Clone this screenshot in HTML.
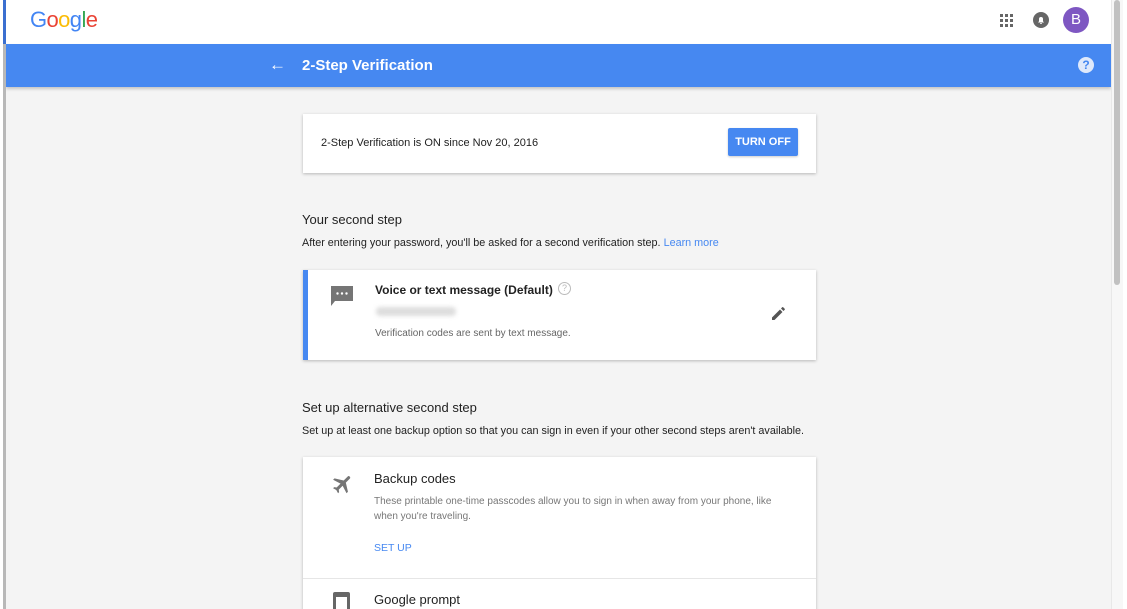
<!DOCTYPE html><html><head><style>
*{margin:0;padding:0;box-sizing:border-box}
html,body{width:1127px;height:609px;overflow:hidden}
body{background:#fff;font-family:"Liberation Sans",Arial,sans-serif;position:relative}
.page{position:absolute;left:6px;top:0;width:1105px;height:609px;background:#f4f4f4;overflow:hidden}
.hdr{position:absolute;left:0;top:0;width:1105px;height:44px;background:#fff}
.bar{position:absolute;left:0;top:44px;width:1105px;height:43px;background:#4688f1;box-shadow:0 2px 3px rgba(0,0,0,.2)}
.card{position:absolute;left:297px;width:513px;background:#fff;box-shadow:0 1px 3px rgba(0,0,0,.25)}
.t{position:absolute;white-space:nowrap}
</style></head><body>
<div style="position:absolute;left:3px;top:0;width:3px;height:44px;background:#3b6fd0"></div>
<div style="position:absolute;left:3px;top:44px;width:3px;height:565px;background:#b8b8b8"></div>
<div class="page">
<div class="hdr">
<div class="t" style="left:24px;top:7px;font-size:22px;letter-spacing:-0.6px"><span style="color:#4285f4">G</span><span style="color:#ea4335">o</span><span style="color:#fbbc05">o</span><span style="color:#4285f4">g</span><span style="color:#34a853">l</span><span style="color:#ea4335">e</span></div>
<svg style="position:absolute;left:994px;top:14px" width="14" height="14"><g fill="#666"><rect x="0" y="0" width="3" height="3"/><rect x="5" y="0" width="3" height="3"/><rect x="10" y="0" width="3" height="3"/><rect x="0" y="5" width="3" height="3"/><rect x="5" y="5" width="3" height="3"/><rect x="10" y="5" width="3" height="3"/><rect x="0" y="10" width="3" height="3"/><rect x="5" y="10" width="3" height="3"/><rect x="10" y="10" width="3" height="3"/></g></svg>
<svg style="position:absolute;left:1027px;top:12px" width="16" height="16"><circle cx="8" cy="8" r="8" fill="#666"/><path d="M5 10.5h6l-1-1.2V7a2 2 0 0 0-4 0v2.3z M7 11h2a1 1 0 0 1-2 0z" fill="#fff"/></svg>
<div style="position:absolute;left:1057px;top:7px;width:26px;height:26px;border-radius:50%;background:#7e57c2;color:#fff;font-size:15px;text-align:center;line-height:26px">B</div>
</div>
<div class="bar">
<div class="t" style="left:263px;top:11px;color:#fff;font-size:17px">←</div>
<div class="t" style="left:296px;top:13px;color:#fff;font-size:15px;font-weight:bold">2-Step Verification</div>
<div style="position:absolute;left:1072px;top:13px;width:16px;height:16px;border-radius:50%;background:#dfe9fb;color:#4688f1;font-size:12px;font-weight:bold;text-align:center;line-height:16px">?</div>
</div>
<div class="card" style="top:114px;height:59px">
<div class="t" style="left:18px;top:23px;font-size:11px;color:#222">2-Step Verification is ON since Nov 20, 2016</div>
<div style="position:absolute;left:425px;top:14px;width:70px;height:28px;background:#4688f1;border-radius:2px;color:#fff;font-size:11px;font-weight:bold;text-align:center;line-height:28px;box-shadow:0 1px 2px rgba(0,0,0,.2)">TURN OFF</div>
</div>
<div class="t" style="left:296px;top:212px;font-size:13px;color:#222">Your second step</div>
<div class="t" style="left:296px;top:237px;font-size:10.8px;color:#222">After entering your password, you'll be asked for a second verification step. <span style="color:#4688f1">Learn more</span></div>
<div class="card" style="top:270px;height:90px;border-left:5px solid #4688f1">
<svg style="position:absolute;left:22px;top:15px" width="24" height="25"><path d="M1 1h22v15H5l-4 5z" fill="#757575"/><g fill="#fff"><circle cx="7.5" cy="8.5" r="1.2"/><circle cx="12" cy="8.5" r="1.2"/><circle cx="16.5" cy="8.5" r="1.2"/></g></svg>
<div class="t" style="left:67px;top:13px;font-size:12px;font-weight:bold;color:#222">Voice or text message (Default)</div>
<div style="position:absolute;left:250px;top:12px;width:13px;height:13px;border:1px solid #bbb;border-radius:50%;color:#bbb;font-size:9px;text-align:center;line-height:11px">?</div>
<div style="position:absolute;left:68px;top:37px;width:80px;height:9px;background:#ddd;border-radius:4px;filter:blur(2px)"></div>
<div class="t" style="left:67px;top:58px;font-size:10px;color:#666">Verification codes are sent by text message.</div>
<svg style="position:absolute;left:462px;top:34px" width="18" height="18"><path d="M2 13.5V16h2.5l8-8L10 5.5zM14.7 5.8a.7.7 0 0 0 0-1L13.2 3.3a.7.7 0 0 0-1 0L11 4.5 13.5 7z" fill="#555"/></svg>
</div>
<div class="t" style="left:296px;top:400px;font-size:13px;color:#222">Set up alternative second step</div>
<div class="t" style="left:296px;top:425px;font-size:10.8px;color:#222">Set up at least one backup option so that you can sign in even if your other second steps aren't available.</div>
<div class="card" style="top:457px;height:160px">
<svg style="position:absolute;left:28px;top:15px" width="24" height="24"><path d="M21 16v-2l-8-5V3.5a1.5 1.5 0 0 0-3 0V9l-8 5v2l8-2.5V19l-2 1.5V22l3.5-1 3.5 1v-1.5L13 19v-5.5z" fill="#757575" transform="rotate(45 12 12)"/></svg>
<div class="t" style="left:71px;top:14px;font-size:13px;color:#222">Backup codes</div>
<div class="t" style="left:71px;top:37px;font-size:10px;color:#777;line-height:15px">These printable one-time passcodes allow you to sign in when away from your phone, like<br>when you're traveling.</div>
<div class="t" style="left:71px;top:85px;font-size:10.5px;color:#4688f1">SET UP</div>
<div style="position:absolute;left:0;top:121px;width:513px;height:1px;background:#e6e6e6"></div>
<div style="position:absolute;left:30px;top:135px;width:17px;height:20px;border:3px solid #666;border-top-width:5px;border-radius:2px"></div>
<div class="t" style="left:71px;top:135px;font-size:13px;color:#222">Google prompt</div>
</div>
</div>
<div style="position:absolute;left:1111px;top:0;width:12px;height:609px;background:#f7f7f7;border-left:1px solid #e8e8e8"></div>
<div style="position:absolute;left:1114px;top:0;width:6px;height:285px;background:#c1c1c1;border-radius:3px"></div>
</body></html>
